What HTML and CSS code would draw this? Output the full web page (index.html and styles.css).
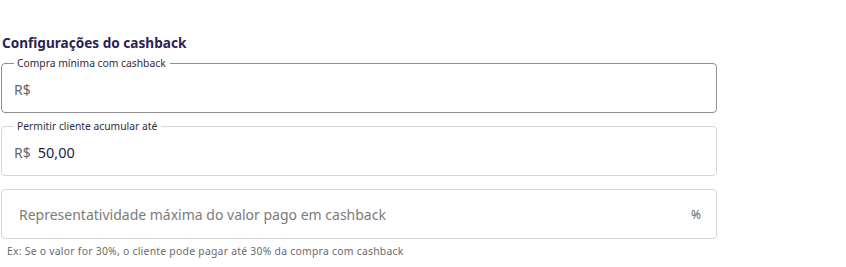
FILE: index.html
```html
<!DOCTYPE html>
<html lang="pt-BR">

<head>
    <meta charset="UTF-8">
    <meta name="viewport" content="width=device-width, initial-scale=1.0">
    <title>Cashback</title>
    <link rel="stylesheet" href="styles.css">
</head>

<body>
    <div class="main-wrap">
        <h3 class="section-title">Configurações do cashback</h3>

        <fieldset class="field field-active">
            <legend class="field-label">Compra mínima com cashback</legend>
            <div class="field-row">
                <span class="prefix">R$</span>
                <span class="value"></span>
            </div>
        </fieldset>

        <fieldset class="field">
            <legend class="field-label">Permitir cliente acumular até</legend>
            <div class="field-row">
                <span class="prefix">R$</span>
                <span class="value">50,00</span>
            </div>
        </fieldset>

        <div class="field field-plain">
            <div class="field-row">
                <span class="placeholder">Representatividade máxima do valor pago em cashback</span>
                <span class="suffix">%</span>
            </div>
        </div>
        <p class="helper">Ex: Se o valor for 30%, o cliente pode pagar até 30% da compra com cashback</p>
    </div>
</body>

</html>
```

FILE: styles.css
```css
html,
body {
    padding: 0;
    margin: 0;
    background: #ffffff;
}

body {
    font-family: "Noto Sans", "Open Sans", sans-serif;
}

.main-wrap {
    width: 716px;
    padding-top: 34px;
    padding-left: 1px;
}

.section-title {
    margin: 0 0 11px 1px;

    font-size: 13.6px;
    line-height: 18px;
    font-weight: 700;
    color: #2b2352;
}

.field {
    box-sizing: border-box;
    height: 50px;
    margin: 0 0 13px 0;
    padding: 0 14px 0 15px;

    border: 1px solid #d6d6d6;
    border-radius: 4px;
}

.field-active {
    border-color: #8f8f8f;
}

fieldset.field {
    margin-top: -6px;
    height: 56px;
    min-width: 0;
}

.field-label {
    padding: 0 4px 0 3px;
    margin-left: -3px;

    font-size: 10.3px;
    line-height: 12px;
    color: #2e2e3a;
}

.field-row {
    display: flex;
    align-items: center;
    height: 100%;
}

fieldset .field-row {
    height: 44px;
    margin-top: -2px;
    padding-left: 0;
}

.prefix {
    font-size: 14px;
    color: #666;
    margin-left: -3px;
    margin-right: 7px;
}

.value {
    font-size: 14.5px;
    color: #231c45;
    font-weight: 400;
}

.placeholder {
    flex: 1;
    margin-left: 2px;
    font-size: 14px;
    color: #7b7b7b;
}

.suffix {
    font-size: 12px;
    color: #666;
    margin-right: 1px;
}

.helper {
    margin: -8px 0 0 6px;
    font-size: 10.4px;
    letter-spacing: 0.25px;
    line-height: 14px;
    color: #6a6a6a;
}
```
